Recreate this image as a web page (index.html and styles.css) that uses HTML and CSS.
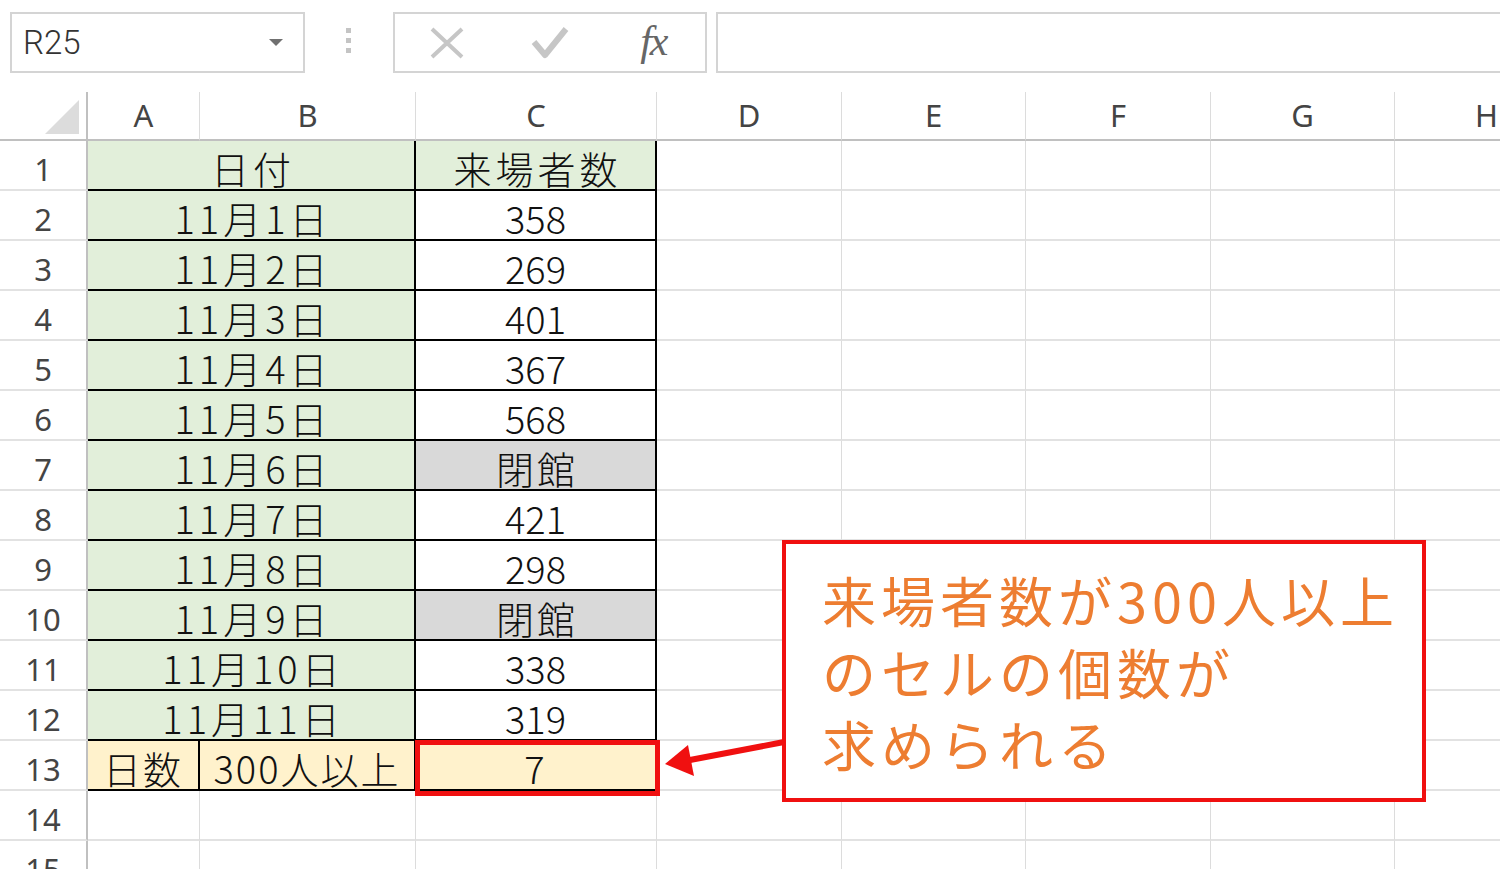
FILE: index.html
```html
<!DOCTYPE html>
<html>
<head>
  <title>来場者数</title>
  <link rel="stylesheet" href="styles.css">
</head>
<body>
  <div class="page">
    <div class="fbar">
      <div class="namebox"><span class="ref">R25</span><span class="drop"></span></div>
      <div class="grip"><i></i><i></i><i></i></div>
      <div class="fxbox">
        <span class="slot">
          <svg width="34" height="32" viewBox="0 0 34 32"><path d="M2 2 L32 30 M32 2 L2 30" stroke="#c6c6c6" stroke-width="4" fill="none"/></svg>
        </span>
        <span class="slot">
          <svg width="38" height="34" viewBox="0 0 38 34"><path d="M3 16 L14 29 L35 3" stroke="#c6c6c6" stroke-width="6" fill="none" stroke-linejoin="round"/></svg>
        </span>
        <span class="slot fx">fx</span>
      </div>
      <div class="formula"></div>
    </div>

    <div class="sheet">
      <div class="row head">
        <div class="corner"><span class="tri"></span></div>
        <div class="ch">A</div><div class="ch">B</div><div class="ch">C</div><div class="ch">D</div>
        <div class="ch">E</div><div class="ch">F</div><div class="ch">G</div><div class="ch">H</div>
      </div>

      <div class="row"><div class="rh">1</div><div class="c ab t green">日付</div><div class="c t green wide">来場者数</div><div class="c"></div><div class="c"></div><div class="c"></div><div class="c"></div><div class="c"></div></div>
      <div class="row"><div class="rh">2</div><div class="c ab t green">11月1日</div><div class="c t">358</div><div class="c"></div><div class="c"></div><div class="c"></div><div class="c"></div><div class="c"></div></div>
      <div class="row"><div class="rh">3</div><div class="c ab t green">11月2日</div><div class="c t">269</div><div class="c"></div><div class="c"></div><div class="c"></div><div class="c"></div><div class="c"></div></div>
      <div class="row"><div class="rh">4</div><div class="c ab t green">11月3日</div><div class="c t">401</div><div class="c"></div><div class="c"></div><div class="c"></div><div class="c"></div><div class="c"></div></div>
      <div class="row"><div class="rh">5</div><div class="c ab t green">11月4日</div><div class="c t">367</div><div class="c"></div><div class="c"></div><div class="c"></div><div class="c"></div><div class="c"></div></div>
      <div class="row"><div class="rh">6</div><div class="c ab t green">11月5日</div><div class="c t">568</div><div class="c"></div><div class="c"></div><div class="c"></div><div class="c"></div><div class="c"></div></div>
      <div class="row"><div class="rh">7</div><div class="c ab t green">11月6日</div><div class="c t closed">閉館</div><div class="c"></div><div class="c"></div><div class="c"></div><div class="c"></div><div class="c"></div></div>
      <div class="row"><div class="rh">8</div><div class="c ab t green">11月7日</div><div class="c t">421</div><div class="c"></div><div class="c"></div><div class="c"></div><div class="c"></div><div class="c"></div></div>
      <div class="row"><div class="rh">9</div><div class="c ab t green">11月8日</div><div class="c t">298</div><div class="c"></div><div class="c"></div><div class="c"></div><div class="c"></div><div class="c"></div></div>
      <div class="row"><div class="rh">10</div><div class="c ab t green">11月9日</div><div class="c t closed">閉館</div><div class="c"></div><div class="c"></div><div class="c"></div><div class="c"></div><div class="c"></div></div>
      <div class="row"><div class="rh">11</div><div class="c ab t green">11月10日</div><div class="c t">338</div><div class="c"></div><div class="c"></div><div class="c"></div><div class="c"></div><div class="c"></div></div>
      <div class="row"><div class="rh">12</div><div class="c ab t green">11月11日</div><div class="c t">319</div><div class="c"></div><div class="c"></div><div class="c"></div><div class="c"></div><div class="c"></div></div>
      <div class="row"><div class="rh">13</div><div class="c t total">日数</div><div class="c t total">300人以上</div><div class="c t total result">7</div><div class="c"></div><div class="c"></div><div class="c"></div><div class="c"></div><div class="c"></div></div>
      <div class="row"><div class="rh">14</div><div class="c"></div><div class="c"></div><div class="c"></div><div class="c"></div><div class="c"></div><div class="c"></div><div class="c"></div><div class="c"></div></div>
      <div class="row"><div class="rh">15</div><div class="c"></div><div class="c"></div><div class="c"></div><div class="c"></div><div class="c"></div><div class="c"></div><div class="c"></div><div class="c"></div></div>
    </div>

    <svg class="arrow" width="125" height="50" viewBox="0 0 125 50">
      <path d="M124 12 L30 30" stroke="#f01010" stroke-width="6" fill="none"/>
      <polygon points="5,34 28,15 34,46" fill="#f01010"/>
    </svg>

    <div class="callout">来場者数が300人以上<br>のセルの個数が<br>求められる</div>
  </div>
</body>
</html>
```

FILE: styles.css
```css
body {
  margin: 0;
  background: #fff;
  font-family: "Noto Sans CJK JP", sans-serif;
}

.page {
  position: relative;
  width: 1500px;
  height: 869px;
  overflow: hidden;
}

/* formula bar */
.fbar {
  height: 92px;
  display: flex;
  align-items: flex-start;
  padding-top: 12px;
  box-sizing: border-box;
}

.namebox {
  margin-left: 10px;
  width: 295px;
  height: 61px;
  border: 2px solid #d4d4d4;
  box-sizing: border-box;
  display: flex;
  align-items: center;
  justify-content: space-between;
  padding: 0 20px 0 11px;
}

.ref {
  font-family: Roboto, sans-serif;
  font-weight: 300;
  font-size: 33px;
  color: #333;
}

.drop {
  width: 0;
  height: 0;
  border-left: 7px solid transparent;
  border-right: 7px solid transparent;
  border-top: 7px solid #707070;
}

.grip {
  margin: 16px 42px 0 41px;
  display: flex;
  flex-direction: column;
  gap: 5px;
}

.grip i {
  display: block;
  width: 5px;
  height: 5px;
  background: #c4c4c4;
}

.fxbox {
  width: 314px;
  height: 61px;
  border: 2px solid #d4d4d4;
  box-sizing: border-box;
  display: flex;
  align-items: center;
}

.slot {
  width: 104px;
  display: flex;
  justify-content: center;
  align-items: center;
}

.fx {
  font-family: "Liberation Serif", serif;
  font-style: italic;
  font-size: 42px;
  color: #666;
  letter-spacing: -2px;
  margin-top: -4px;
}

.formula {
  margin-left: 9px;
  flex: 1;
  height: 61px;
  border: 2px solid #d4d4d4;
  border-right: none;
  box-sizing: border-box;
}

/* sheet */
.row {
  display: grid;
  grid-template-columns: 88px 112px 216px 241px 185px 184px 185px 184px 184px;
  grid-template-rows: 50px;
  height: 50px;
}

.row.head {
  grid-template-rows: 49px;
  height: 49px;
}

.corner {
  border-right: 2px solid #c0c0c0;
  border-bottom: 2px solid #c0c0c0;
  display: flex;
  justify-content: flex-end;
  align-items: flex-end;
  padding: 0 7px 5px 0;
}

.tri {
  width: 0;
  height: 0;
  border-left: 34px solid transparent;
  border-bottom: 34px solid #dcdcdc;
}

.ch {
  border-right: 1px solid #dcdcdc;
  border-bottom: 2px solid #c0c0c0;
  font-family: "Noto Sans", sans-serif;
  font-size: 31px;
  color: #444;
  text-align: center;
  line-height: 47px;
}

.rh {
  border-right: 2px solid #c0c0c0;
  border-bottom: 2px solid #e2e2e2;
  font-family: "Noto Sans", sans-serif;
  font-size: 31px;
  color: #444;
  text-align: center;
  line-height: 46px;
  padding-top: 5px;
  box-sizing: border-box;
}

.c {
  border-right: 1px solid #dcdcdc;
  border-bottom: 2px solid #e2e2e2;
  box-sizing: border-box;
  font-size: 38px;
  font-weight: 300;
  color: #111;
  text-align: center;
  line-height: 42px;
  padding-top: 6px;
  white-space: nowrap;
  overflow: visible;
}

.ab {
  grid-column: span 2;
  letter-spacing: 4px;
  text-indent: 4px;
}

.wide {
  letter-spacing: 4px;
  text-indent: 4px;
}

.t {
  border-right: 2px solid #000;
  border-bottom: 2px solid #000;
}

.green {
  background: #e2efda;
}

.closed {
  background: #d9d9d9;
  letter-spacing: 3px;
  text-indent: 3px;
}

.total {
  background: #fff2cc;
  letter-spacing: 2px;
}

.result {
  position: relative;
}

.result::after {
  content: "";
  position: absolute;
  left: -1px;
  top: -1px;
  right: -5px;
  bottom: -7px;
  border: 5px solid #f01010;
}

/* annotation */
.arrow {
  position: absolute;
  left: 660px;
  top: 730px;
}

.callout {
  position: absolute;
  left: 782px;
  top: 540px;
  width: 644px;
  height: 262px;
  box-sizing: border-box;
  border: 4px solid #f01010;
  background: #fff;
  padding: 20px 0 0 36px;
  font-size: 54px;
  line-height: 72px;
  letter-spacing: 5px;
  color: #ed7d31;
  white-space: nowrap;
}
```
